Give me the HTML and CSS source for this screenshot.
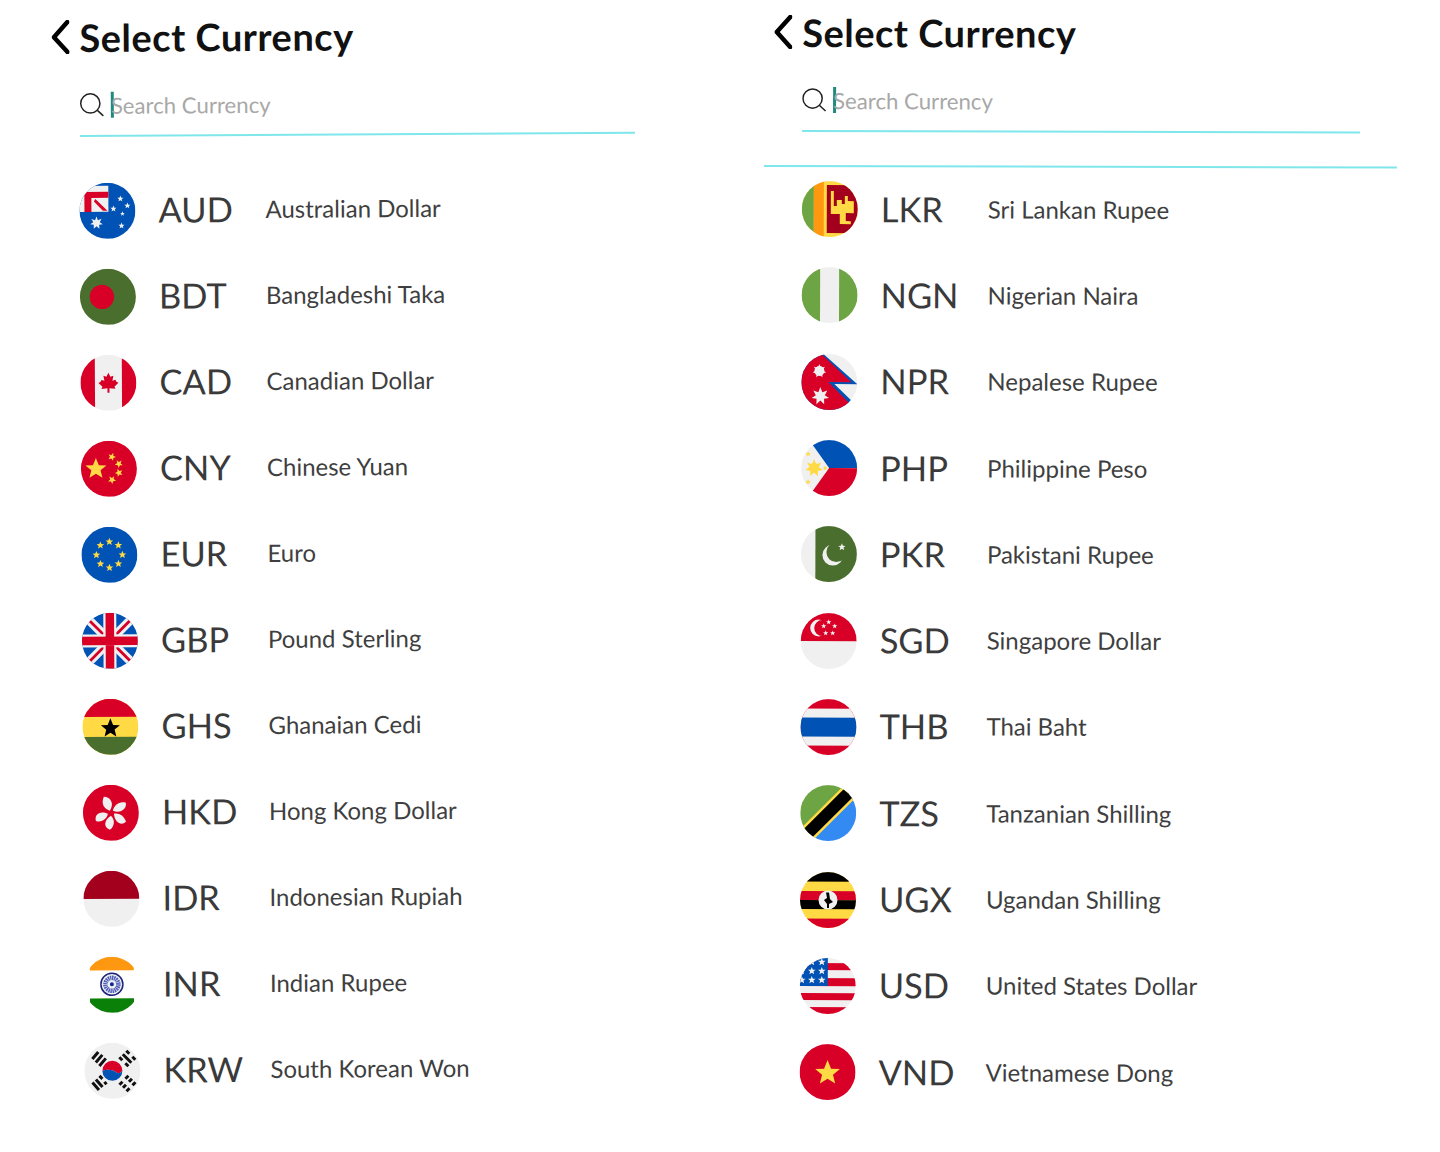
FILE: index.html
```html
<!DOCTYPE html>
<html lang="en">
<head>
<meta charset="utf-8">
<title>Select Currency</title>
<link rel="stylesheet" href="styles.css">
</head>
<body>
<svg class="defs" width="0" height="0" aria-hidden="true">
  <defs>
    <polygon id="s" points="0,-1 .27,-.33 .951,-.309 .42,.13 .588,.809 0,.43 -.588,.809 -.42,.13 -.951,-.309 -.27,-.33"/>
    <polygon id="b" points="0,-1 .22,-.42 .78,-.62 .5,-.1 .97,.22 .42,.3 .43,.9 0,.5 -.43,.9 -.42,.3 -.97,.22 -.5,-.1 -.78,-.62 -.22,-.42"/>
  </defs>
</svg>
<main class="page">

<section class="panel panel-left">
  <header class="head">
    <svg class="back" viewBox="0 0 18 34"><path d="M16 2 2.5 17 16 32"/></svg>
    <h1>Select Currency</h1>
  </header>
  <div class="search">
    <svg class="lens" viewBox="0 0 24 24"><circle cx="10.5" cy="10.5" r="9.6"/><path d="M17.5 17.5 23.5 23"/></svg>
    <span class="caret"></span>
    <span class="ph">Search Currency</span>
  </div>
  <ul class="list">
    <li class="row">
      <svg class="flag" viewBox="0 0 56 56"><rect width="56" height="56" fill="#0052b4"/><path d="M0 3H29V29H0Z" fill="#f0f0f0"/><path d="M5 9H29V15H12V29H5Z" fill="#d80027"/><path d="M16 16 28 28H23.500L14.500 18.500Z" fill="#d80027"/><g fill="#f0f0f0"><use href="#s" transform="translate(41 16) scale(3.200)"/><use href="#s" transform="translate(48 23) scale(3.200)"/><use href="#s" transform="translate(34 26) scale(3.200)"/><use href="#s" transform="translate(43 31) scale(2.400)"/><use href="#s" transform="translate(42 43) scale(3.200)"/><use href="#b" transform="translate(17 40) scale(6.500)"/></g></svg>
      <span class="code">AUD</span><span class="name">Australian Dollar</span>
    </li>
    <li class="row">
      <svg class="flag" viewBox="0 0 56 56"><rect width="56" height="56" fill="#496e2d"/><circle cx="22" cy="28" r="12.2" fill="#d80027"/></svg>
      <span class="code">BDT</span><span class="name">Bangladeshi Taka</span>
    </li>
    <li class="row">
      <svg class="flag" viewBox="0 0 56 56"><rect width="56" height="56" fill="#f0f0f0"/><rect width="14.500" height="56" fill="#d80027"/><rect x="41.500" width="14.500" height="56" fill="#d80027"/><path d="M28 18 30 22 33 21 32 26 35 25 36 27 38 28 34 32 35 34 29 33.500V38H27V33.500L21 34 22 32 18 28 20 27 21 25 24 26 23 21 26 22Z" fill="#d80027"/></svg>
      <span class="code">CAD</span><span class="name">Canadian Dollar</span>
    </li>
    <li class="row">
      <svg class="flag" viewBox="0 0 56 56"><rect width="56" height="56" fill="#d80027"/><g fill="#ffda44"><use href="#s" transform="translate(15 28) scale(11)"/><use href="#s" transform="translate(31 16) rotate(20) scale(4.200)"/><use href="#s" transform="translate(38 23) rotate(40) scale(4.200)"/><use href="#s" transform="translate(38 32) rotate(-20) scale(4.200)"/><use href="#s" transform="translate(31 39) rotate(-40) scale(4.200)"/></g></svg>
      <span class="code">CNY</span><span class="name">Chinese Yuan</span>
    </li>
    <li class="row">
      <svg class="flag" viewBox="0 0 56 56"><rect width="56" height="56" fill="#0052b4"/><g fill="#ffda44"><use href="#s" transform="translate(28 15) scale(4)"/><use href="#s" transform="translate(37 18.500) scale(4)"/><use href="#s" transform="translate(41 28) scale(4)"/><use href="#s" transform="translate(37 37) scale(4)"/><use href="#s" transform="translate(28 41) scale(4)"/><use href="#s" transform="translate(19 37) scale(4)"/><use href="#s" transform="translate(15 28) scale(4)"/><use href="#s" transform="translate(19 18.500) scale(4)"/></g></svg>
      <span class="code">EUR</span><span class="name">Euro</span>
    </li>
    <li class="row">
      <svg class="flag" viewBox="0 0 56 56"><rect width="56" height="56" fill="#0052b4"/><path d="M0 0 56 56M56 0 0 56" stroke="#f0f0f0" stroke-width="9"/><path d="M6 6 22 22M50 50 34 34M50 6 34 22M6 50 22 34" stroke="#d80027" stroke-width="2.800"/><path d="M28 0V56M0 28H56" stroke="#f0f0f0" stroke-width="13"/><path d="M28 0V56M0 28H56" stroke="#d80027" stroke-width="8.500"/></svg>
      <span class="code">GBP</span><span class="name">Pound Sterling</span>
    </li>
    <li class="row">
      <svg class="flag" viewBox="0 0 56 56"><rect width="56" height="56" fill="#ffda44"/><rect width="56" height="18" fill="#d80027"/><rect y="38" width="56" height="18" fill="#496e2d"/><use href="#s" transform="translate(28 29.500) scale(10)" fill="#000"/></svg>
      <span class="code">GHS</span><span class="name">Ghanaian Cedi</span>
    </li>
    <li class="row">
      <svg class="flag" viewBox="0 0 56 56"><rect width="56" height="56" fill="#d80027"/><g fill="#f0f0f0"><path d="M27 26C21 24 18 19 21 12 27 12 32 18 27 26Z"/><path d="M30 26C31 20 37 16 43 18 44 24 38 29 30 26Z"/><path d="M31 29C36 28 41 31 43 37 39 41 32 39 31 29Z"/><path d="M28 31C32 35 32 41 27 45 21 43 20 36 28 31Z"/><path d="M25 29C24 34 19 38 13 36 11 30 17 25 25 29Z"/></g></svg>
      <span class="code">HKD</span><span class="name">Hong Kong Dollar</span>
    </li>
    <li class="row">
      <svg class="flag" viewBox="0 0 56 56"><rect width="56" height="56" fill="#f0f0f0"/><rect width="56" height="28" fill="#a2001d"/></svg>
      <span class="code">IDR</span><span class="name">Indonesian Rupiah</span>
    </li>
    <li class="row">
      <svg class="flag" viewBox="0 0 56 56"><rect width="56" height="56" fill="#fff"/><rect x="6" width="44" height="13.500" fill="#ff9811"/><rect x="6" y="41.500" width="44" height="14.500" fill="#0a8008"/><circle cx="28" cy="27.500" r="11" fill="#f0f0f0" stroke="#1a237e" stroke-width="1.500"/><circle cx="28" cy="27.500" r="6.500" fill="none" stroke="#5060b8" stroke-width="4.500" stroke-dasharray="1.400 .6"/><circle cx="28" cy="27.500" r="2" fill="#0b2a9a"/></svg>
      <span class="code">INR</span><span class="name">Indian Rupee</span>
    </li>
    <li class="row">
      <svg class="flag" viewBox="0 0 56 56"><rect width="56" height="56" fill="#f0f0f0"/><path d="M18 28A10 10 0 0 1 38 28C36 31 33 31 31 29 28 27 24 26 18 28Z" fill="#d80027"/><path d="M18 28C24 26 28 27 31 29 33 31 36 31 38 28A10 10 0 0 1 18 28Z" fill="#0052b4"/><g fill="none" stroke="#111" stroke-width="3"><path d="M8 16 14 9M11.500 19.500 18 12M15 23 21.500 15.500"/><path d="M35 14.500 38 17.500M41 20.500 44 23.500M38.500 11.500 47 20M42 8 45 11M48 14 51 17"/><path d="M35 42 38 39M41 36 44 33M38.500 45 41.500 42M44.500 39 47.500 36M42 48.500 45 45.500M48 42.500 51 39.500"/><path d="M8 39.500 14.500 47M11.500 36.500 18 44M15 33 18 36M20 39 22 41.500"/></g></svg>
      <span class="code">KRW</span><span class="name">South Korean Won</span>
    </li>
  </ul>
</section>

<section class="panel panel-right">
  <header class="head">
    <svg class="back" viewBox="0 0 18 34"><path d="M16 2 2.5 17 16 32"/></svg>
    <h1>Select Currency</h1>
  </header>
  <div class="search">
    <svg class="lens" viewBox="0 0 24 24"><circle cx="10.5" cy="10.5" r="9.6"/><path d="M17.5 17.5 23.5 23"/></svg>
    <span class="caret"></span>
    <span class="ph">Search Currency</span>
  </div>
  <div class="divider"></div>
  <ul class="list">
    <li class="row">
      <svg class="flag" viewBox="0 0 56 56"><rect width="56" height="56" fill="#ffda44"/><rect width="12" height="56" fill="#6da544"/><rect x="12" width="10" height="56" fill="#ff9811"/><rect x="25" y="4" width="31" height="48" fill="#a2001d"/><path d="M29 10H32V25H35V19H40V23H43V15H46V20H52V32H44V40H49V43H38V33H29Z" fill="#ffda44"/></svg>
      <span class="code">LKR</span><span class="name">Sri Lankan Rupee</span>
    </li>
    <li class="row">
      <svg class="flag" viewBox="0 0 56 56"><rect width="56" height="56" fill="#f0f0f0"/><rect width="18.500" height="56" fill="#6da544"/><rect x="37.500" width="18.500" height="56" fill="#6da544"/></svg>
      <span class="code">NGN</span><span class="name">Nigerian Naira</span>
    </li>
    <li class="row">
      <svg class="flag" viewBox="0 0 56 56"><rect width="56" height="56" fill="#f0f0f0"/><path d="M0 0H22L56 30H33L56 52V56H0Z" fill="#0052b4"/><path d="M0 0H20L50 28H27L51 52V56H0Z" fill="#d80027"/><g fill="#f0f0f0"><use href="#b" transform="translate(19 42) scale(9)"/><circle cx="18" cy="17" r="5"/><use href="#b" transform="translate(18 17) scale(7)"/></g></svg>
      <span class="code">NPR</span><span class="name">Nepalese Rupee</span>
    </li>
    <li class="row">
      <svg class="flag" viewBox="0 0 56 56"><rect width="56" height="56" fill="#f0f0f0"/><path d="M8 0H56V28H28Z" fill="#0052b4"/><path d="M8 56H56V28H28Z" fill="#d80027"/><circle cx="13" cy="28" r="5" fill="#ffda44"/><use href="#b" transform="translate(13 28) scale(9)" fill="#ffda44"/><g fill="#ffda44"><use href="#s" transform="translate(7 14) scale(2.800)"/><use href="#s" transform="translate(7 42) scale(2.800)"/><use href="#s" transform="translate(24 28) scale(2.600)"/></g></svg>
      <span class="code">PHP</span><span class="name">Philippine Peso</span>
    </li>
    <li class="row">
      <svg class="flag" viewBox="0 0 56 56"><rect width="56" height="56" fill="#f0f0f0"/><rect x="14.500" width="41.500" height="56" fill="#496e2d"/><circle cx="32" cy="29" r="10.500" fill="#f0f0f0"/><circle cx="35.500" cy="26" r="10" fill="#496e2d"/><use href="#s" transform="translate(41 21) scale(3.800)" fill="#f0f0f0"/></svg>
      <span class="code">PKR</span><span class="name">Pakistani Rupee</span>
    </li>
    <li class="row">
      <svg class="flag" viewBox="0 0 56 56"><rect width="56" height="56" fill="#f0f0f0"/><rect width="56" height="28" fill="#d80027"/><circle cx="18" cy="15" r="8.500" fill="#f0f0f0"/><circle cx="21.500" cy="15" r="8" fill="#d80027"/><g fill="#f0f0f0"><use href="#s" transform="translate(28 9) scale(2.700)"/><use href="#s" transform="translate(34 13) scale(2.700)"/><use href="#s" transform="translate(23 13) scale(2.700)"/><use href="#s" transform="translate(25 20) scale(2.700)"/><use href="#s" transform="translate(32 20) scale(2.700)"/></g></svg>
      <span class="code">SGD</span><span class="name">Singapore Dollar</span>
    </li>
    <li class="row">
      <svg class="flag" viewBox="0 0 56 56"><rect width="56" height="56" fill="#d80027"/><rect y="9.500" width="56" height="37" fill="#f0f0f0"/><rect y="18.500" width="56" height="19" fill="#0052b4"/></svg>
      <span class="code">THB</span><span class="name">Thai Baht</span>
    </li>
    <li class="row">
      <svg class="flag" viewBox="0 0 56 56"><path d="M0 0H56L0 56Z" fill="#6da544"/><path d="M56 0V56H0Z" fill="#338af3"/><path d="M0 56 56 0" stroke="#ffda44" stroke-width="17"/><path d="M0 56 56 0" stroke="#000" stroke-width="12"/></svg>
      <span class="code">TZS</span><span class="name">Tanzanian Shilling</span>
    </li>
    <li class="row">
      <svg class="flag" viewBox="0 0 56 56"><rect width="56" height="56" fill="#ffda44"/><rect width="56" height="9.500" fill="#000"/><rect y="19" width="56" height="9" fill="#d80027"/><rect y="28" width="56" height="9" fill="#000"/><rect y="46.500" width="56" height="9.500" fill="#d80027"/><circle cx="28" cy="28" r="9.500" fill="#f0f0f0"/><path d="M26 20.500H29L30 27 33 30 29 32V36H27V32L24 28 27 26Z" fill="#000"/></svg>
      <span class="code">UGX</span><span class="name">Ugandan Shilling</span>
    </li>
    <li class="row">
      <svg class="flag" viewBox="0 0 56 56"><rect width="56" height="56" fill="#f0f0f0"/><g fill="#d80027"><rect y="5" width="56" height="7"/><rect y="20" width="56" height="8"/><rect y="35" width="56" height="7"/><rect y="49" width="56" height="7"/></g><rect width="28" height="28" fill="#0052b4"/><g fill="#f0f0f0"><use href="#s" transform="translate(22 4) scale(4)"/><use href="#s" transform="translate(12 4) scale(4)"/><use href="#s" transform="translate(22 13) scale(4)"/><use href="#s" transform="translate(12 13) scale(4)"/><use href="#s" transform="translate(2 13) scale(4)"/><use href="#s" transform="translate(22 22) scale(4)"/><use href="#s" transform="translate(12 22) scale(4)"/><use href="#s" transform="translate(2 22) scale(4)"/></g></svg>
      <span class="code">USD</span><span class="name">United States Dollar</span>
    </li>
    <li class="row">
      <svg class="flag" viewBox="0 0 56 56"><rect width="56" height="56" fill="#d80027"/><use href="#s" transform="translate(28 29) scale(13)" fill="#ffda44"/></svg>
      <span class="code">VND</span><span class="name">Vietnamese Dong</span>
    </li>
  </ul>
</section>

</main>
</body>
</html>
```

FILE: styles.css
```css
* { box-sizing: border-box; }
html, body { margin: 0; background: #fff; }
body { font-family: "Lato", "Liberation Sans", sans-serif; overflow: hidden; }
.defs { position: absolute; }
.page { display: flex; width: 1440px; height: 1152px; }
.panel { flex: none; }
.panel-left { width: 722px; padding: 13px 87px 0 80px; transform: rotate(-0.33deg); transform-origin: 80px 135px; }
.panel-right { width: 718px; padding: 8px 80px 0 80px; transform: rotate(0.15deg); transform-origin: 80px 135px; }
.head { display: flex; align-items: center; height: 48px; margin-left: -28px; gap: 10px; }
.back { width: 18px; height: 34px; fill: none; stroke: #000; stroke-width: 4.500; stroke-linecap: round; stroke-linejoin: round; }
h1 { margin: 0; font-size: 38px; line-height: 48px; font-weight: 700; color: #111; letter-spacing: .5px; }
.search { display: flex; align-items: center; height: 48.500px; margin-top: 27px; padding-bottom: 12.500px; border-bottom: 2px solid #7fe7ec; }
.panel-right .search { padding-bottom: 13px; height: 49px; margin-top: 27px; }
.lens { width: 24px; height: 24px; margin-right: 7px; fill: none; stroke: #222; stroke-width: 1.500; }
.caret { width: 3px; height: 26px; background: #1f8a7d; margin-right: -3px; }
.ph { font-size: 22.200px; color: #a8a8a8; }
.divider { height: 2px; margin: 33px -37px 0 -38px; background: #7fe7ec; }
.list { list-style: none; margin: 29.500px 0 0; padding: 0; }
.panel-left .list { margin-left: -1px; }
.panel-right .list { margin-top: -2px; }
.row { display: flex; align-items: center; height: 86px; color: #3c3c3c; }
.panel-right .row { height: 86.300px; }
.flag { flex: none; width: 56px; height: 56px; margin-top: 2px; border-radius: 50%; }
.panel-left .flag { margin-top: 3px; }
.code { flex: none; width: 107px; margin-left: 23px; font-size: 34.500px; color: #3a3a3a; }
.name { font-size: 24px; color: #3f3f3f; }
```
